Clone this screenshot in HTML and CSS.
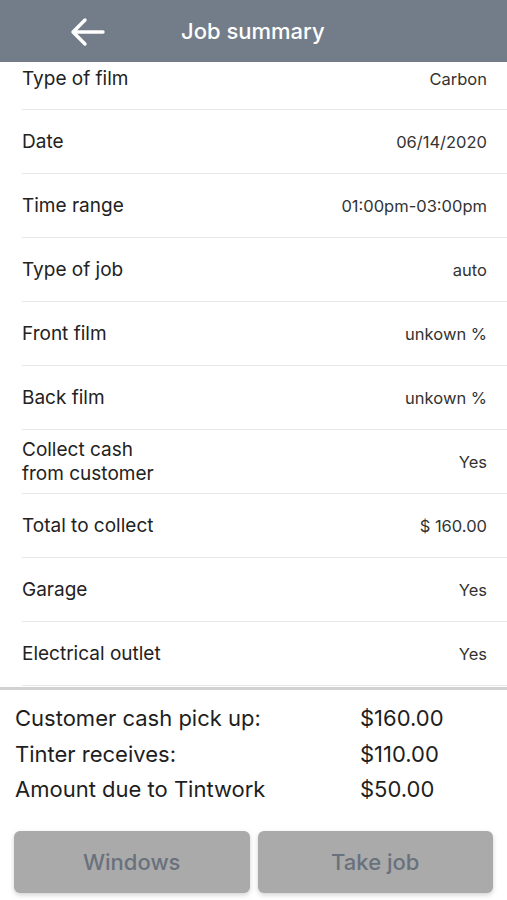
FILE: index.html
```html
<!DOCTYPE html>
<html>
<head>
    <title>Job summary</title>
    <link rel="stylesheet" href="styles.css">
</head>
<body>
    <div id="header">
        <a href="#" class="back-btn">
            <svg width="36" height="30" viewBox="0 0 36 30">
                <path d="M34 15H4M16 3L4 15l12 12" fill="none" stroke="#fff" stroke-width="3.4" stroke-linecap="round" stroke-linejoin="round"/>
            </svg>
        </a>
        <h1>Job summary</h1>
    </div>

    <div class="details">
        <div class="details-inner">
            <div class="row"><span class="label">Type of film</span><span class="value">Carbon</span></div>
            <div class="row"><span class="label">Date</span><span class="value">06/14/2020</span></div>
            <div class="row"><span class="label">Time range</span><span class="value">01:00pm-03:00pm</span></div>
            <div class="row"><span class="label">Type of job</span><span class="value">auto</span></div>
            <div class="row"><span class="label">Front film</span><span class="value">unkown %</span></div>
            <div class="row"><span class="label">Back film</span><span class="value">unkown %</span></div>
            <div class="row"><span class="label">Collect cash<br>from customer</span><span class="value">Yes</span></div>
            <div class="row"><span class="label">Total to collect</span><span class="value">$ 160.00</span></div>
            <div class="row"><span class="label">Garage</span><span class="value">Yes</span></div>
            <div class="row"><span class="label">Electrical outlet</span><span class="value">Yes</span></div>
        </div>
    </div>

    <div class="totals">
        <div class="total-row"><span class="total-label">Customer cash pick up:</span><span>$160.00</span></div>
        <div class="total-row"><span class="total-label">Tinter receives:</span><span>$110.00</span></div>
        <div class="total-row"><span class="total-label">Amount due to Tintwork</span><span>$50.00</span></div>
    </div>

    <div class="actions">
        <button class="action-btn">Windows</button>
        <button class="action-btn">Take job</button>
    </div>
</body>
</html>
```

FILE: styles.css
```css
body {
    margin: 0;
    width: 507px;
    height: 900px;
    overflow: hidden;
    background: #fff;
    font-family: Inter, "Liberation Sans", sans-serif;
    color: #222;
}

#header {
    height: 62px;
    background-color: #737d89;
    display: flex;
    align-items: center;
}

.back-btn {
    display: flex;
    margin-left: 69px;
    margin-top: 2px;
}

#header h1 {
    margin: 0 0 0 76px;
    font-size: 22px;
    font-weight: 500;
    color: #fff;
}

.details {
    height: 625px;
    overflow: hidden;
    border-bottom: 3px solid #d2d2d2;
}

.details-inner {
    margin-top: -14px;
    padding-left: 22px;
}

.row {
    height: 63px;
    display: flex;
    align-items: center;
    justify-content: space-between;
    padding-right: 20px;
    border-bottom: 1px solid #e8e8e8;
}

.row:first-child {
    height: 61px;
}

.label {
    font-size: 19px;
    line-height: 24px;
    color: #222;
}

.value {
    font-size: 16.5px;
    color: #333;
}

.totals {
    padding: 11px 0 0 15px;
}

.total-row {
    display: flex;
    font-size: 22px;
    line-height: 35.5px;
    color: #1e1e1e;
}

.total-label {
    width: 345px;
}

.actions {
    display: flex;
    gap: 8px;
    padding: 0 14px;
    margin-top: 23px;
}

.action-btn {
    flex: 1;
    height: 62px;
    border: none;
    border-radius: 6px;
    background-color: #aaaaaa;
    color: #69717d;
    font-family: Inter, "Liberation Sans", sans-serif;
    font-size: 22px;
    font-weight: 500;
    box-shadow: 0 2px 5px rgba(0, 0, 0, 0.18);
}
```
